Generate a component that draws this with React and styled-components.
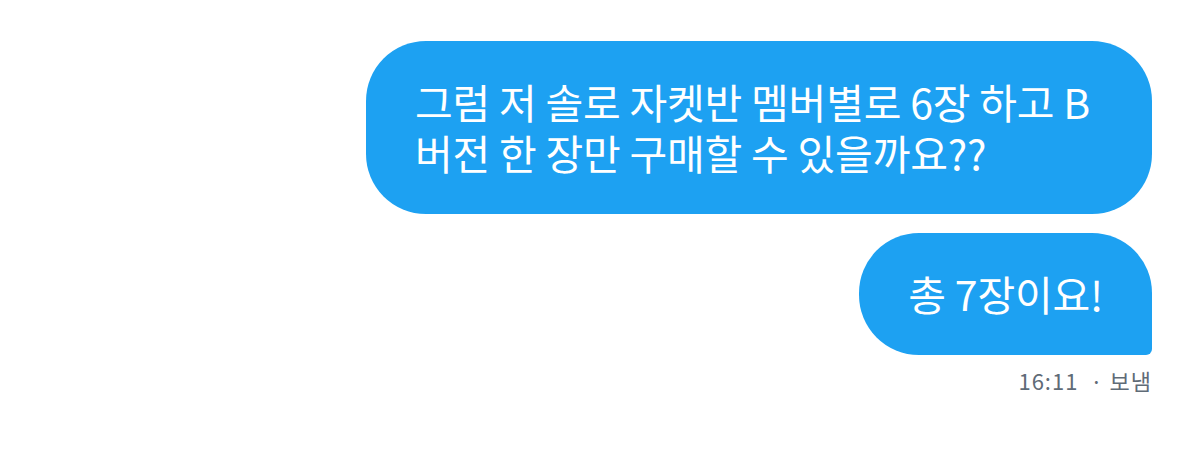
import React from "react";
import styled, { createGlobalStyle } from "styled-components";

const GlobalStyle = createGlobalStyle`
  html, body {
    margin: 0;
    padding: 0;
    background: #ffffff;
  }
  body {
    font-family: "Noto Sans CJK KR", "Noto Sans", sans-serif;
  }
`;

const Thread = styled.div`
  width: 1179px;
  height: 460px;
  box-sizing: border-box;
  padding: 41px 27px 0 0;
  display: flex;
  flex-direction: column;
  align-items: flex-end;
`;

const Bubble = styled.div`
  max-width: 786px;
  box-sizing: border-box;
  padding: 35px 49px 36px 49px;
  background: #1da1f2;
  color: #ffffff;
  font-size: 41px;
  line-height: 51px;
  letter-spacing: -0.2px;
  border-radius: 60px;
  border-bottom-right-radius: ${(p) => (p.$last ? "6px" : "60px")};
  margin-bottom: ${(p) => (p.$last ? "0" : "19px")};
`;

const Meta = styled.div`
  margin-top: 8px;
  font-size: 22px;
  line-height: 34px;
  letter-spacing: 1px;
  color: #5f6b77;
  white-space: pre;
`;

export default function App() {
  return (
    <>
      <GlobalStyle />
      <Thread>
        <Bubble>그럼 저 솔로 자켓반 멤버별로 6장 하고 B 버전 한 장만 구매할 수 있을까요??</Bubble>
        <Bubble $last>총 7장이요!</Bubble>
        <Meta>16:11  · 보냄</Meta>
      </Thread>
    </>
  );
}
